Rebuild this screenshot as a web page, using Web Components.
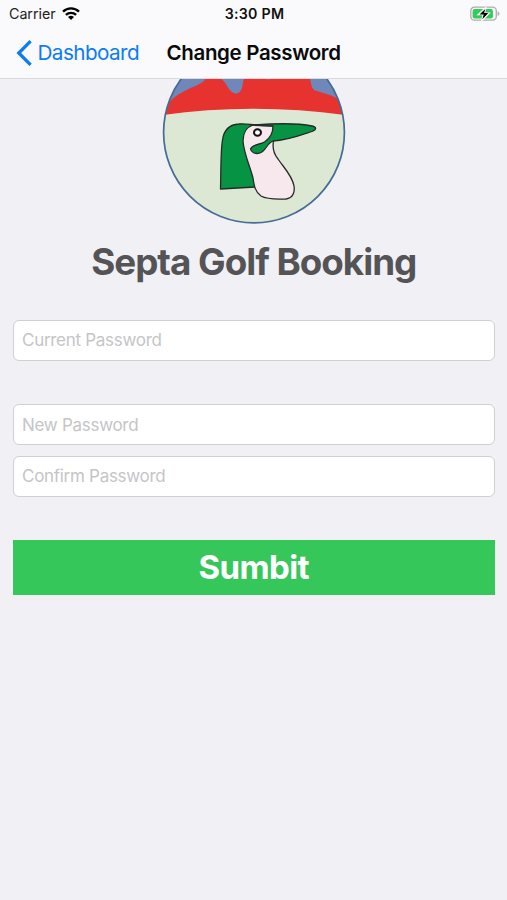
<!DOCTYPE html>
<html lang="en">
<head>
<meta charset="utf-8">
<title>Change Password</title>
<style>
body { margin: 0; background: #f0f0f5; font-family: Inter, "Liberation Sans", sans-serif; }
</style>
</head>
<body>
<password-screen></password-screen>
<script>
const define = (name, html) => customElements.define(name, class extends HTMLElement {
  constructor() {
    super();
    this.attachShadow({ mode: 'open' }).innerHTML = html;
  }
});

define('status-bar', `
<style>
:host { display: grid; grid-template-columns: 1fr auto 1fr; align-items: center; height: 27px; padding: 0 7px 0 9px; font-size: 14.3px; line-height: 27px; color: #222; }
.left { display: flex; align-items: center; gap: 6px; }
.carrier { letter-spacing: -0.05px; }
.time { font-weight: 600; font-size: 14.2px; letter-spacing: 0.25px; color: #111; }
.battery { justify-self: end; }
svg { display: block; }
</style>
<div class="left"><span class="carrier">Carrier</span>
<svg width="18" height="14" viewBox="0 0 18 14" fill="none" stroke="#000" stroke-width="2.4"><path d="M1 4.600a11.500 11.500 0 0 1 16 0M3.900 7.900a7.400 7.400 0 0 1 10.200 0"/><path d="M9 13 6 10.100a4.300 4.300 0 0 1 6 0z" fill="#000" stroke="none"/></svg></div>
<span class="time">3:30 PM</span>
<svg class="battery" width="30" height="16" viewBox="0 0 30 16"><rect x=".8" y="1.200" width="25.500" height="13" rx="3.600" fill="#fafafd" stroke="#aeaeb2" stroke-width="1.300"/><path d="M27.600 5.500c2.500.7 2.500 3.700 0 4.400z" fill="#aeaeb2"/><rect x="2.600" y="3" width="20.300" height="9.400" rx="2" fill="#35cb5b"/><path d="M15.500 2.200 8.500 8.500h4.800l-1.300 5.700 7-7h-4.700z" fill="#000" stroke="#fafafd" stroke-width="1.600"/><path d="M15.300 3 9.600 8.500h4.200L12.300 13.200l5.900-6.200h-4.100z" fill="#000"/></svg>
`);

define('nav-bar', `
<style>
:host { display: flex; align-items: center; height: 51px; padding-left: 16px; border-bottom: 1px solid #d9d9de; line-height: 51px; }
.back { display: flex; align-items: center; gap: 4.500px; width: 150.500px; color: #0b7cf4; font-size: 20.700px; letter-spacing: -0.58px; }
.title { font-size: 20.500px; font-weight: 600; letter-spacing: -0.34px; color: #0a0a0a; white-space: nowrap; }
</style>
<div class="back"><svg width="17" height="28" viewBox="0 0 17 28" fill="none" stroke="#0b7cf4" stroke-width="3.300"><path d="M14.600 2.200 2.800 14l11.800 11.800"/></svg><slot name="back"></slot></div>
<span class="title"><slot></slot></span>
`);

define('club-logo', `
<style>:host { display: block; width: 184px; height: 146px; } svg { display: block; }</style>
<svg width="184" height="146" viewBox="162 79 184 146">
<defs><clipPath id="disc"><circle cx="254" cy="132.400" r="90.400"/></clipPath></defs>
<g clip-path="url(#disc)">
<path fill="#dce8d3" d="M162 40h184v190H162z"/>
<path fill="#e7332f" d="M160 40h188v75.500Q252 102 160 115.500z"/>
<path fill="#7087b9" d="M160 116c5-11 12-18 21-23 10-6 17-7 26-14h14c6 3 7 13 14 14.500 9 0 7-11 9-14.500V40h-84z"/>
<path fill="#e7332f" d="M203 81q4-3 5-6h10l4 5c-6-2-12-1-19 1z"/>
<path fill="#7087b9" d="M309 77c3 5 1 13 8 14 8 3 13 3 23 9V70h-31zM263 77q5 5 9 0z"/>
</g>
<circle cx="254" cy="132.400" r="90.400" fill="none" stroke="#456c96" stroke-width="1.700"/>
<g stroke="#242b26" stroke-width="1.300" stroke-linejoin="round">
<path fill="#079344" d="M220.500 189C221 174 220.500 151 222.500 140 224 129 230 124.500 239 124c7-.6 13 1 19 1l-3 62z"/>
<path fill="#f6e8ec" d="M253 125c-6 2-10 8-10 16 1 13 7 25 10 37 1 7 2 14 8 18 7 4 17 3 25 3 7-1 9-7 8-13-2-11-10-18-16-27-4-5-6-10-4.500-18l1-15z"/>
<path fill="#079344" d="M250.500 125.200C273 123.500 298 123 312 126c5 1 4.500 4 0 5.500-12 4-25 9-39 9.500-6 2-7 10-13 12-5 1.600-9-1-9.500-4 2-5 9-4 14-7 6-4 8.500-10 8.500-16z"/>
</g>
<ellipse cx="257.500" cy="132.500" rx="3.500" ry="3.200" fill="#fff" stroke="#111" stroke-width="2"/>
</svg>
`);

define('text-field', `
<style>
:host { display: block; box-sizing: border-box; height: 41px; padding-left: 8px; border: 1px solid #d0d0d4; border-radius: 6px; background: #fff; color: #c5c5c7; font-size: 17px; line-height: 39px; letter-spacing: -0.29px; }
</style><slot></slot>
`);

define('submit-button', `
<style>
:host { display: block; height: 54.500px; background: #35c75a; color: #fff; text-align: center; font-size: 33px; font-weight: 700; line-height: 54px; letter-spacing: -0.62px; }
</style><slot></slot>
`);

define('password-screen', `
<style>
:host { display: flex; flex-direction: column; width: 507px; height: 900px; overflow: hidden; background: #f0f0f5; }
header { background: #fafafd; height: 79px; }
main { display: flex; flex-direction: column; padding: 0 12.500px 0 13px; }
club-logo { align-self: center; }
h1 { margin: 12px 0 0; height: 50px; line-height: 50px; text-align: center; font-size: 36.800px; font-weight: 700; letter-spacing: -1.020px; color: #545456; white-space: nowrap; }
.current { margin-top: 33px; }
.new { margin-top: 43px; line-height: 40px; }
.confirm { margin-top: 11px; height: 40.500px; }
submit-button { margin-top: 43.500px; }
</style>
<header><status-bar></status-bar><nav-bar><span slot="back">Dashboard</span>Change Password</nav-bar></header>
<main>
<club-logo></club-logo>
<h1>Septa Golf Booking</h1>
<text-field class="current">Current Password</text-field>
<text-field class="new">New Password</text-field>
<text-field class="confirm">Confirm Password</text-field>
<submit-button>Sumbit</submit-button>
</main>
`);
</script>
</body>
</html>
